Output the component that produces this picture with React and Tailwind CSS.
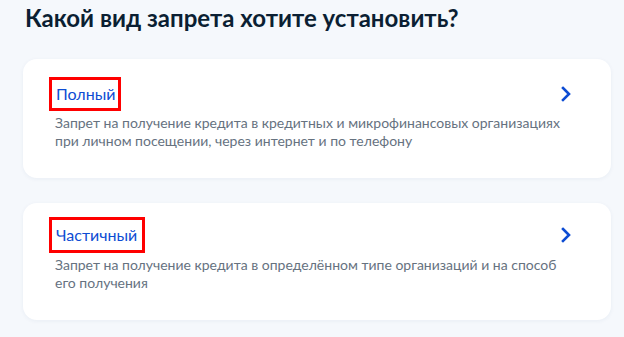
import React from 'react';

const options = [
  {
    title: 'Полный',
    text: 'Запрет на получение кредита в кредитных и микрофинансовых организациях при личном посещении, через интернет и по телефону',
    pad: 'pt-[18px]',
    box: 'py-[2px]',
  },
  {
    title: 'Частичный',
    text: 'Запрет на получение кредита в определённом типе организаций и на способ его получения',
    pad: 'pt-[14px]',
    box: 'py-[3px] pr-[5px]',
  },
];

const Chevron = () => (
  <svg width="10" height="16" viewBox="0 0 10 16" fill="none">
    <path d="M2 2l6 6-6 6" stroke="#0d4cd3" strokeWidth="2.6" strokeLinecap="square" />
  </svg>
);

const App = () => {
  return (
    <div
      className="min-h-screen w-full bg-[#f5f8fc] px-[23px] pt-[2px]"
      style={{ fontFamily: 'Lato, "Noto Sans", sans-serif' }}
    >
      <h1 className="pl-[2px] text-[24px] leading-8 font-bold text-[#0b1f33]">
        Какой вид запрета хотите установить?
      </h1>

      <div className="mt-[25px] flex w-[588px] flex-col gap-[25px]">
        {options.map((o) => (
          <div
            key={o.title}
            className={`rounded-[14px] bg-white pl-[26px] pr-10 pb-7 shadow-[0_1px_4px_rgba(30,60,120,0.06)] ${o.pad}`}
          >
            <div className="flex items-center justify-between">
              <span
                className={`inline-block border-[3px] border-[#ff0000] pl-[4px] pr-[3px] text-[16px] leading-6 text-[#0d4cd3] ${o.box}`}
              >
                {o.title}
              </span>
              <Chevron />
            </div>
            <p className="mt-[3px] max-w-[518px] pl-[6px] text-[14px] leading-[18px] text-[#66727f]">
              {o.text}
            </p>
          </div>
        ))}
      </div>
    </div>
  );
};

export default App;
